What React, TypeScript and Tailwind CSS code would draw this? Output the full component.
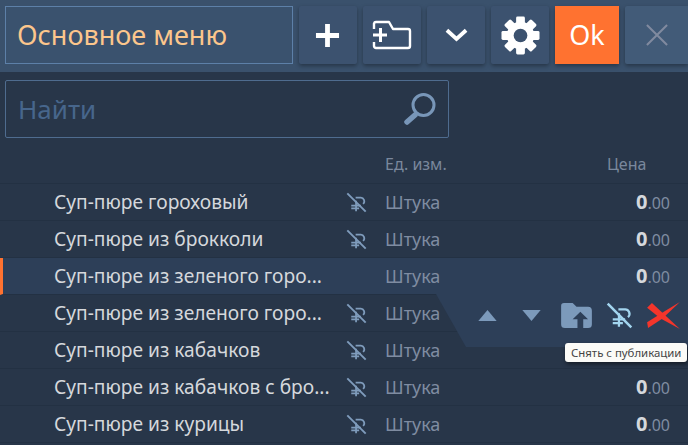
import React from 'react';

const items = [
  { name: 'Суп-пюре гороховый' },
  { name: 'Суп-пюре из брокколи' },
  { name: 'Суп-пюре из зеленого горо...', active: true },
  { name: 'Суп-пюре из зеленого горо...', covered: true },
  { name: 'Суп-пюре из кабачков', covered: true },
  { name: 'Суп-пюре из кабачков с бро...' },
  { name: 'Суп-пюре из курицы' },
];

// ruble sign with a slash through it
const Unpublished = ({ className }: { className?: string }) => (
  <svg viewBox="0 0 24 24" className={className} fill="none" stroke="currentColor" strokeWidth="2">
    <path d="M1.5 1.5L22.5 22.5" strokeWidth="2.2" />
    <path d="M11.5 10V22M6 15.5H17M6 18.8H15M11 6.5h5.5a4 4 0 0 1 3 7" />
  </svg>
);

const Gear = () => (
  <svg viewBox="0 0 40 40" className="h-[39px] w-[39px]">
    <circle cx="20" cy="20" r="14" fill="white" />
    {[0, 45, 90, 135, 180, 225, 270, 315].map((a) => (
      <rect key={a} x="15.5" y="0.5" width="9" height="10" rx="1.5" fill="white" transform={`rotate(${a} 20 20)`} />
    ))}
    <circle cx="20" cy="20" r="7" fill="#3c526f" />
  </svg>
);

const ToolButton = ({ children }: { children: React.ReactNode }) => (
  <button className="flex h-[58px] w-[58px] items-center justify-center rounded-[2px] bg-[#3c526f] shadow-[0_2px_4px_rgba(0,0,0,0.35)]">
    {children}
  </button>
);

export default function App() {
  return (
    <div className="relative h-[445px] w-[688px] overflow-hidden bg-[#283649] font-['Noto_Sans',sans-serif]">
      {/* Top bar */}
      <div className="flex h-[72px] gap-[6px] bg-[#3a516c] pl-[5px] pt-[6px]">
        <div className="flex h-[58px] w-[288px] items-center border border-[#5d80a8] bg-[#3a526e] pl-[11px] text-[27px] text-[#fcc68c]">
          Основное меню
        </div>
        <ToolButton>
          <svg viewBox="0 0 26 26" className="mr-[1px] h-[25px] w-[25px]" fill="none" stroke="white" strokeWidth="5">
            <path d="M13 1V25M1 13H25" />
          </svg>
        </ToolButton>
        <ToolButton>
          <svg viewBox="0 0 40 30" className="h-[30px] w-[40px]" fill="none" stroke="white" strokeWidth="2.4" strokeLinejoin="round">
            <path d="M2 9V3.5A2 2 0 0 1 4 2H17L21 9H36A2 2 0 0 1 38 11V26A2 2 0 0 1 36 28H4A2 2 0 0 1 2 26V22" />
            <path d="M1 15H15M8.5 8V22" strokeWidth="3" />
          </svg>
        </ToolButton>
        <ToolButton>
          <svg viewBox="0 0 24 14" className="h-[14px] w-[23px]" fill="none" stroke="white" strokeWidth="4">
            <path d="M2 2L12 11L22 2" />
          </svg>
        </ToolButton>
        <ToolButton>
          <Gear />
        </ToolButton>
        <button className="h-[58px] w-[64px] bg-[#ff7230] text-[27px] text-white shadow-[0_2px_4px_rgba(0,0,0,0.35)]">Ok</button>
        <button className="flex h-[58px] w-[63px] items-center justify-center rounded-l-[2px] bg-[#425b78] shadow-[0_2px_4px_rgba(0,0,0,0.35)]">
          <svg viewBox="0 0 24 24" className="h-[22px] w-[22px]" fill="none" stroke="#808a9f" strokeWidth="2.2">
            <path d="M1 1L23 23M23 1L1 23" />
          </svg>
        </button>
      </div>

      {/* Search */}
      <div className="px-[5px] pt-[8px]">
        <div className="flex h-[58px] w-[444px] items-center justify-between rounded-[2px] border border-[#4f6c8f] pl-[12px] pr-[11px] text-[26px] text-[#47668c]">
          <span>Найти</span>
          <svg viewBox="0 0 34 34" className="h-[34px] w-[34px]" fill="none">
            <circle cx="20.5" cy="13" r="10.5" stroke="#7896b8" strokeWidth="3" />
            <path d="M4 30L12 23" stroke="#7896b8" strokeWidth="5.5" strokeLinecap="round" />
          </svg>
        </div>
      </div>

      {/* Table head */}
      <div className="flex h-[46px] items-end border-b border-[#233143] pb-[10px] pl-[385px] text-[16px] leading-[18px] text-[#7a889d]">
        <span className="w-[222px]">Ед. изм.</span>
        <span>Цена</span>
      </div>

      {/* Rows */}
      {items.map((item, i) => (
        <div
          key={i}
          className={`flex h-[37px] items-center border-b border-[#233143] pl-[54px] ${item.active ? 'border-l-[3px] !pl-[51px] border-l-[#ff7230] bg-[#2d3f58]' : ''}`}
        >
          <span className="w-[288px] whitespace-nowrap text-[19.2px] text-[#d5d8dc]">{item.name}</span>
          <span className="flex w-[43px] shrink-0">
            {!item.active && <Unpublished className="ml-[4px] h-[21px] w-[21px] text-[#7f9cbc]" />}
          </span>
          <span className="w-[201px] text-[18px] text-[#7f8ca1]">Штука</span>
          {!item.covered && (
            <span className="w-[84px] text-right text-[16px] text-[#7f8ca1]">
              <b className="text-[20px] font-bold text-[#d5d8dc]">0</b>.00
            </span>
          )}
        </div>
      ))}

      {/* Row actions */}
      <div className="absolute left-[436px] top-[294px] flex h-[53px] w-[252px] items-center bg-[#2d3f58] pb-[11px] pl-[42px] [clip-path:polygon(0_0,100%_0,100%_100%,30px_100%)]">
        <svg viewBox="0 0 20 12" className="h-[11px] w-[19px]" fill="#7c9abb"><path d="M10 0L20 12H0Z" /></svg>
        <svg viewBox="0 0 20 12" className="ml-[25px] h-[11px] w-[19px]" fill="#7c9abb"><path d="M0 0H20L10 12Z" /></svg>
        <svg viewBox="0 0 32 26" className="ml-[20px] h-[25px] w-[31px]">
          <path d="M3 0H12L16 4H28A4 4 0 0 1 32 8V22A4 4 0 0 1 28 26H4A4 4 0 0 1 0 22V3A3 3 0 0 1 3 0Z" fill="#7c9abb" />
          <path d="M20 9L28 17H23V26H17V17H12Z" fill="#2d3f58" />
        </svg>
        <Unpublished className="ml-[14px] h-[27px] w-[27px] text-[#a3d5ef]" />
        <svg viewBox="0 0 34 28" className="ml-[14px] h-[27px] w-[33px]" fill="#f4352b">
          <path d="M0 6L5 1L34 28L14 17Z" />
          <path d="M1 27L0 21L19 9L34 0L16 17Z" />
        </svg>
      </div>

      {/* Tooltip */}
      <div className="absolute left-[565px] top-[343px] h-[19px] rounded-[3px] bg-[#fbfbf7] px-[6px] text-[11.4px] leading-[19px] whitespace-nowrap text-[#444] shadow-[1px_2px_4px_rgba(0,0,0,0.5)]">
        Снять с публикации
      </div>
    </div>
  );
}
